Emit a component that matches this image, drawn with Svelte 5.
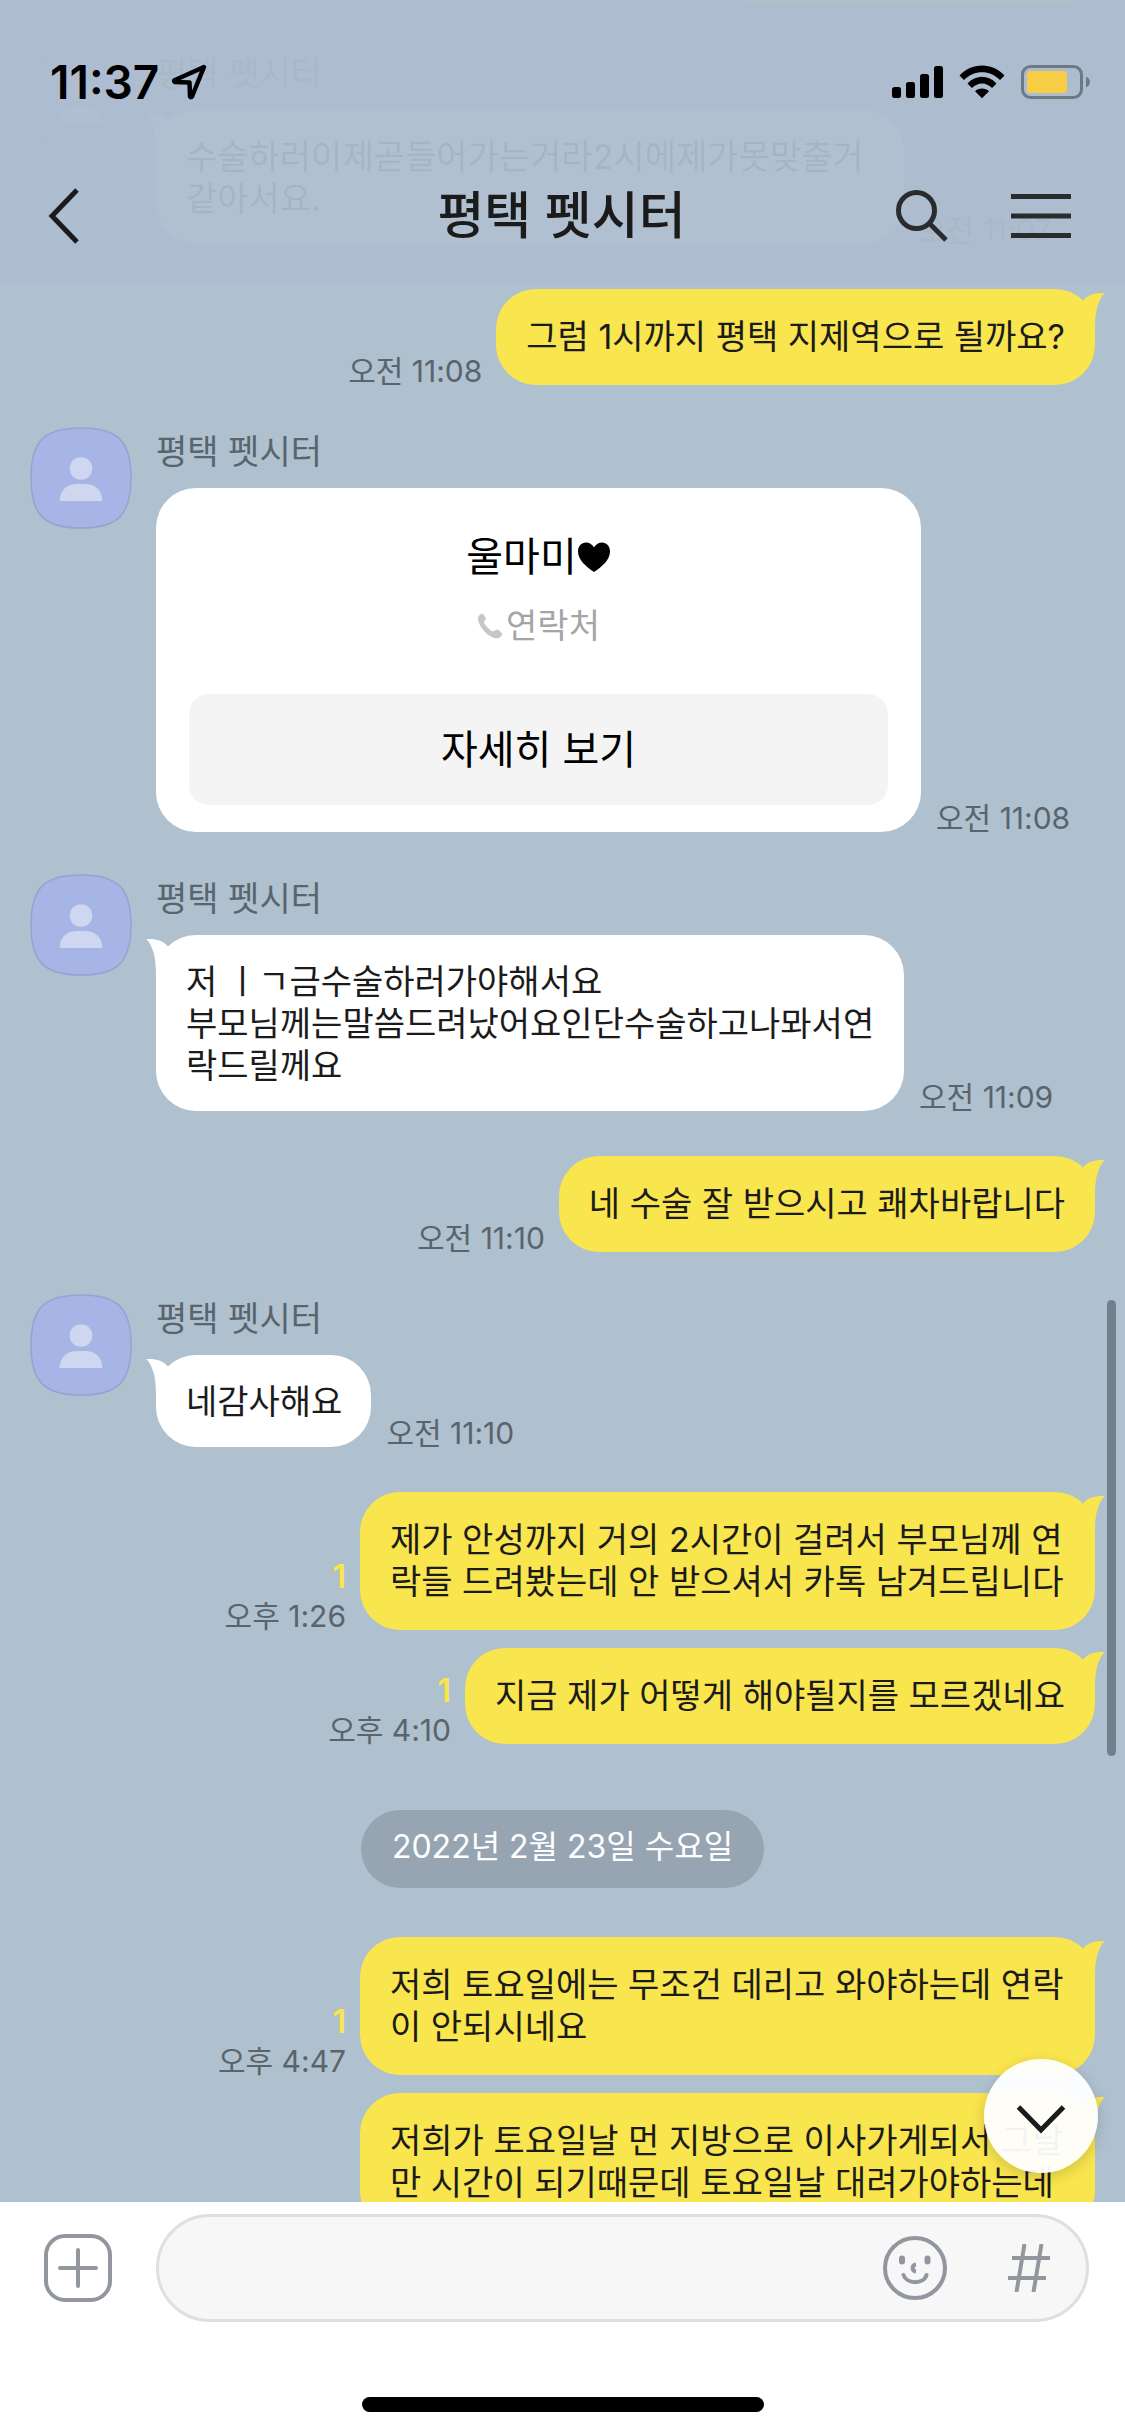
<script>
	let { title = '평택 펫시터' } = $props();

	let draft = $state('');

	const messages = [
		{ from: 'me', text: '', cut: true },
		{
			from: 'them',
			text: '수술하러이제곧들어가는거라2시에제가못맞출거같아서요.',
			time: '오전 11:07'
		},
		{ from: 'me', text: '그럼 1시까지 평택 지제역으로 될까요?', time: '오전 11:08' },
		{ from: 'them', contact: '울마미', time: '오전 11:08' },
		{
			from: 'them',
			text: '저 ㅣㄱ금수술하러가야해서요\n부모님께는말씀드려났어요인단수술하고나뫄서연락드릴께요',
			time: '오전 11:09'
		},
		{ from: 'me', text: '네 수술 잘 받으시고 쾌차바랍니다', time: '오전 11:10' },
		{ from: 'them', text: '네감사해요', time: '오전 11:10' },
		{
			from: 'me',
			text: '제가 안성까지 거의 2시간이 걸려서 부모님께 연락들 드려봤는데 안 받으셔서 카톡 남겨드립니다',
			time: '오후 1:26',
			unread: 1
		},
		{ from: 'me', text: '지금 제가 어떻게 해야될지를 모르겠네요', time: '오후 4:10', unread: 1 },
		{ date: '2022년 2월 23일 수요일' },
		{
			from: 'me',
			text: '저희 토요일에는 무조건 데리고 와야하는데 연락이 안되시네요',
			time: '오후 4:47',
			unread: 1
		},
		{
			from: 'me',
			text: '저희가 토요일날 먼 지방으로 이사가게되서 그날만 시간이 되기때문데 토요일날 대려가야하는데'
		}
	];
</script>

{#snippet tail()}
	<svg class="tail" width="32" height="40" viewBox="0 0 32 40" aria-hidden="true">
		<path d="M10 11.500C15 5.500 22 3.500 31.500 4C25 12 22 21 22 40L6 40Z" />
	</svg>
{/snippet}

{#snippet stamp(message)}
	<div class="stamp">
		{#if message.unread}
			<span class="unread">{message.unread}</span>
		{/if}
		{#if message.time}
			<time>{message.time}</time>
		{/if}
	</div>
{/snippet}

<div class="app">
	<header>
		<div class="status">
			<div class="clock">
				<span>11:37</span>
				<svg width="36" height="36" viewBox="0 0 36 36">
					<path
						d="M33 3L3.500 16.200Q2.500 17.500 4 18L18.500 18.500L19 32.500Q20 34 21 32.500Z"
						fill="none"
						stroke="#000"
						stroke-width="4.500"
						stroke-linejoin="round"
					/>
				</svg>
			</div>
			<div class="signals">
				<svg width="51" height="34" viewBox="0 0 51 34">
					<rect x="0" y="22" width="9" height="11" rx="2.500" />
					<rect x="14" y="17" width="9" height="16" rx="2.500" />
					<rect x="28" y="9" width="9" height="24" rx="2.500" />
					<rect x="42" y="1" width="9" height="32" rx="2.500" />
				</svg>
				<svg width="46" height="34" viewBox="0 0 46 34">
					<path d="M0.500 10.500C12 -3 34 -3 45.500 10.500L41 15C31 4.500 15 4.500 5 15Z" />
					<path d="M8.500 18.500C16.500 9.500 29.500 9.500 37.500 18.500L33 23C27 17 19 17 13 23Z" />
					<path d="M16 26.200C19.500 22.500 26.500 22.500 30 26.200L23 33.200Z" />
				</svg>
				<svg width="70" height="34" viewBox="0 0 70 34">
					<rect x="1.500" y="1.500" width="59" height="31" rx="8" fill="none" stroke="#6d7985" stroke-width="3" />
					<rect x="6" y="6" width="40" height="22" rx="3" fill="#f6cd45" />
					<path d="M65 11.500C68 13 69 15 69 17S68 21 65 22.500Z" fill="#6d7985" />
				</svg>
			</div>
		</div>
		<nav>
			<button class="icon" aria-label="뒤로">
				<svg width="32" height="56" viewBox="0 0 32 56">
					<path d="M29 2L4 28L29 54" stroke="#1b1b1c" />
				</svg>
			</button>
			<h1>{title}</h1>
			<div class="actions">
				<button class="icon" aria-label="검색">
					<svg width="52" height="52" viewBox="0 0 52 52">
						<circle cx="20.500" cy="20.500" r="18" />
						<path d="M33.500 33.500L50 50" />
					</svg>
				</button>
				<button class="icon" aria-label="메뉴">
					<svg width="60" height="52" viewBox="0 0 60 52">
						<path d="M0 6.500H60M0 26H60M0 45.500H60" />
					</svg>
				</button>
			</div>
		</nav>
	</header>

	<main>
		<div class="messages">
			{#each messages as message}
				{#if message.date}
					<div class="date">{message.date}</div>
				{:else if message.from === 'me'}
					<div class="row me" class:cut={message.cut}>
						{@render stamp(message)}
						<div class="bubble">{message.text}{@render tail()}</div>
					</div>
				{:else}
					<div class="row them">
						<svg class="avatar" width="102" height="102" viewBox="0 0 102 102">
							<path
								d="M51 1C88 1 101 14 101 51S88 101 51 101S1 88 1 51S14 1 51 1Z"
								fill="#a6b5e5"
								stroke="#95a3d3"
								stroke-width="1.500"
							/>
							<circle cx="51" cy="41.500" r="11.300" fill="#cfd6f0" />
							<path d="M29.700 74C29.700 63 37 57 47 57H55C65 57 72.300 63 72.300 74Z" fill="#cfd6f0" />
						</svg>
						<div class="content">
							<div class="name">{title}</div>
							<div class="line">
								{#if message.contact}
									<div class="card">
										<div class="who">
											{message.contact}
											<svg width="34" height="32" viewBox="0 0 34 32">
												<path
													d="M17 31C9 25.500 1 19 1 10.500C1 5 4.500 1.500 9 1.500C12.500 1.500 15.500 3.500 17 6.500C18.500 3.500 21.500 1.500 25 1.500C29.500 1.500 33 5 33 10.500C33 19 25 25.500 17 31Z"
												/>
											</svg>
										</div>
										<div class="kind">
											<svg width="26" height="26" viewBox="0 0 26 26">
												<path
													d="M1 5.500C1 3 3.500 .8 5 .8C6.500 .8 8.800 4 8.800 5.800C8.800 7 7 8 7 9.300C7 11.500 13.500 18.300 16 18.300C17.500 18.300 18.500 16.500 20 16.500C21.500 16.500 25.200 19.500 25.200 21C25.200 22.800 22.500 25.300 20 25.300C12 25.300 1 13.500 1 5.500Z"
													fill="#c6c6c6"
												/>
											</svg>
											연락처
										</div>
										<button class="more">자세히 보기</button>
									</div>
								{:else}
									<div class="bubble">{message.text}{@render tail()}</div>
								{/if}
								{@render stamp(message)}
							</div>
						</div>
					</div>
				{/if}
			{/each}
		</div>

		<div class="scrollbar"></div>
		<button class="down" aria-label="맨 아래로">
			<svg width="52" height="30" viewBox="0 0 52 30">
				<path d="M3.500 3L26 26L48.500 3" fill="none" stroke="#1b1b1c" stroke-width="5" />
			</svg>
		</button>
	</main>

	<footer>
		<div class="composer">
			<button class="icon" aria-label="추가">
				<svg width="68" height="68" viewBox="0 0 68 68">
					<rect x="2" y="2" width="64" height="64" rx="19" />
					<path d="M34 16V52M16 34H52" stroke-linecap="round" />
				</svg>
			</button>
			<div class="field">
				<input type="text" aria-label="메시지 입력" bind:value={draft} />
				<button class="icon" aria-label="이모티콘">
					<svg width="64" height="64" viewBox="0 0 64 64">
						<circle cx="32" cy="32" r="30" />
						<path d="M19 22.500V25.500M44.500 22.500V25.500" stroke-width="6" stroke-linecap="round" />
						<path d="M33 28.500C28.500 29 28.500 35 33 35.500" />
						<path d="M20.500 39C23.500 48.500 41 48.500 43.500 39" stroke-linecap="round" />
					</svg>
				</button>
				<button class="icon" aria-label="샵검색">
					<svg width="42" height="48" viewBox="0 0 42 48">
						<path d="M16.500 0L8.500 48M33.500 0L25.500 48M4 14H42M0 34H38" />
					</svg>
				</button>
			</div>
		</div>
		<div class="home"></div>
	</footer>
</div>

<style>
	:global(body) {
		margin: 0;
	}

	.app {
		position: relative;
		display: flex;
		flex-direction: column;
		height: 100vh;
		overflow: hidden;
		background: #afc0cf;
		font-family: Inter, 'Noto Sans CJK KR', sans-serif;
		font-size: 34px;
		line-height: 42px;
		color: #1b1b1c;
	}

	button {
		padding: 0;
		border: 0;
		background: none;
		font: inherit;
		color: inherit;
		cursor: pointer;
	}

	svg {
		display: block;
		flex: none;
	}

	.icon svg {
		fill: none;
		stroke: #2a2b2c;
		stroke-width: 5;
	}

	footer .icon svg {
		stroke: #92979f;
		stroke-width: 4;
	}

	/* header floats over the scrolled messages */
	header {
		position: absolute;
		top: 0;
		left: 0;
		right: 0;
		z-index: 2;
		background: rgba(173, 189, 207, 0.95);
	}

	.status {
		display: flex;
		align-items: center;
		justify-content: space-between;
		box-sizing: border-box;
		height: 148px;
		padding: 16px 34px 0 50px;
	}

	.clock {
		display: flex;
		align-items: center;
		gap: 12px;
		font-size: 46px;
		font-weight: 600;
		color: #000;
	}

	.signals {
		display: flex;
		align-items: center;
		gap: 16px;
	}

	nav {
		display: grid;
		grid-template-columns: 1fr auto 1fr;
		align-items: center;
		height: 135px;
		padding: 0 54px 0 48px;
	}

	nav > .icon {
		justify-self: start;
	}

	h1 {
		margin: 0;
		padding-left: 4px;
		font-size: 51px;
		font-weight: 500;
		line-height: 60px;
	}

	.actions {
		display: flex;
		align-items: center;
		justify-content: flex-end;
		gap: 63px;
	}

	main {
		position: relative;
		flex: 1;
		min-height: 0;
		overflow: hidden;
	}

	.messages {
		display: flex;
		flex-direction: column;
	}

	.row {
		display: flex;
	}

	.me {
		justify-content: flex-end;
		gap: 14px;
		margin-top: 18px;
		padding-right: 30px;
	}

	.them {
		gap: 24px;
		margin-top: 42px;
		padding-left: 30px;
	}

	.them + .me {
		margin-top: 45px;
	}

	.date + .me {
		margin-top: 49px;
	}

	/* only the lower edge of this one is still in view */
	.cut {
		margin-top: -87px;
	}

	.cut + .them {
		margin-top: 44px;
	}

	.cut .bubble {
		width: 376px;
	}

	.content {
		display: flex;
		flex-direction: column;
		gap: 15px;
		padding-top: 4px;
	}

	.name {
		color: #59646c;
	}

	.line {
		display: flex;
		gap: 15px;
	}

	.bubble {
		position: relative;
		box-sizing: border-box;
		min-height: 92px;
		padding: 26px 29px 24px 30px;
		border-radius: 40px;
		background: #fff;
		white-space: pre-wrap;
		word-break: break-all;
	}

	.them .bubble {
		max-width: 748px;
	}

	.me .bubble {
		max-width: 735px;
		padding: 27px 30px;
		background: #f9e54d;
	}

	.tail {
		position: absolute;
		top: 0;
		right: -10px;
		fill: #f9e54d;
	}

	.them .tail {
		right: auto;
		left: -10px;
		transform: scaleX(-1);
		fill: #fff;
	}

	.stamp {
		display: flex;
		flex-direction: column;
		justify-content: flex-end;
		font-size: 30px;
		line-height: 28px;
		white-space: nowrap;
		color: #59646c;
	}

	.me .stamp {
		align-items: flex-end;
	}

	.unread {
		margin-bottom: 11px;
		font-size: 32px;
		font-weight: 600;
		color: #f9e54d;
	}

	.card {
		display: flex;
		flex-direction: column;
		align-items: center;
		box-sizing: border-box;
		width: 765px;
		padding: 41px 33px 27px;
		border-radius: 40px;
		background: #fff;
		color: #000;
	}

	.who {
		display: flex;
		align-items: center;
		font-size: 40px;
		line-height: 56px;
	}

	.kind {
		display: flex;
		align-items: center;
		gap: 3px;
		margin: 20px 0 47px;
		color: #a5a5a5;
	}

	.more {
		width: 100%;
		height: 111px;
		border-radius: 20px;
		background: #f4f4f4;
		font-size: 40px;
	}

	.date {
		align-self: center;
		margin-top: 66px;
		padding: 16px 31px 20px;
		border-radius: 40px;
		background: #97a5b3;
		font-size: 32px;
		color: #fff;
	}

	.scrollbar {
		position: absolute;
		top: 1300px;
		right: 9px;
		width: 9px;
		height: 456px;
		border-radius: 5px;
		background: #707f8b;
	}

	.down {
		position: absolute;
		right: 27px;
		bottom: 29px;
		display: flex;
		align-items: center;
		justify-content: center;
		width: 114px;
		height: 114px;
		padding-top: 6px;
		border-radius: 50%;
		background: rgba(255, 255, 255, 0.95);
		box-shadow: 0 4px 14px rgba(0, 0, 0, 0.16);
	}

	footer {
		display: flex;
		flex-direction: column;
		gap: 75px;
		padding: 12px 0 24px;
		background: #fff;
	}

	.composer {
		display: flex;
		align-items: center;
		gap: 44px;
		padding: 0 36px 0 44px;
	}

	.field {
		display: flex;
		flex: 1;
		align-items: center;
		gap: 61px;
		box-sizing: border-box;
		height: 108px;
		padding: 0 36px 0 45px;
		border: 3px solid #dfdfdf;
		border-radius: 54px;
		background: #f7f7f7;
	}

	input {
		flex: 1;
		min-width: 0;
		padding: 0;
		border: 0;
		outline: 0;
		background: none;
		font: inherit;
		color: inherit;
	}

	.home {
		align-self: center;
		width: 402px;
		height: 15px;
		border-radius: 8px;
		background: #000;
	}
</style>
